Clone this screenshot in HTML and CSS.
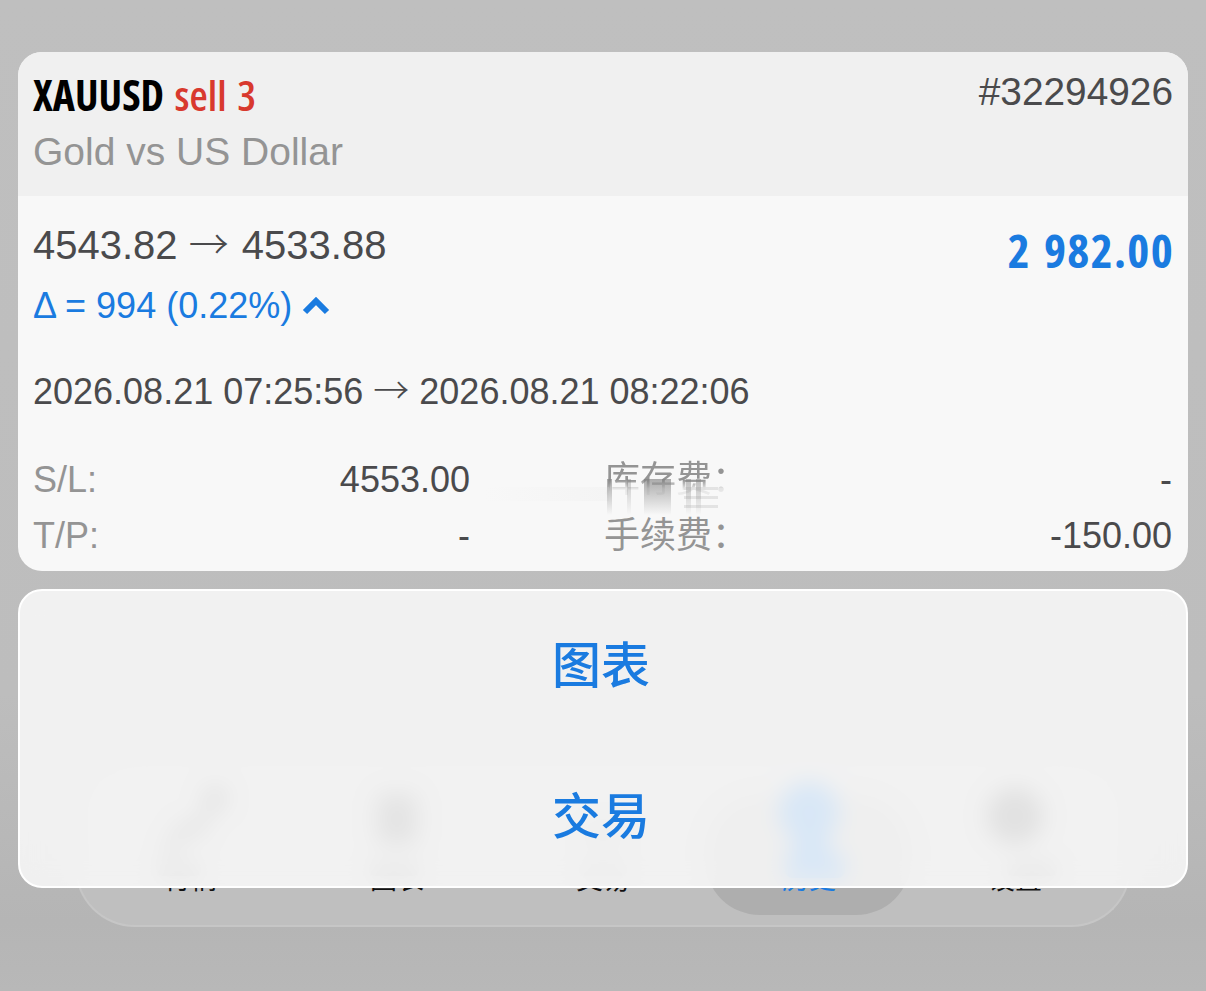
FILE: index.html
```html
<!DOCTYPE html>
<html lang="zh">
<head>
<meta charset="utf-8">
<title>XAUUSD</title>
<link rel="stylesheet" href="styles.css">
</head>
<body>
<nav class="tabbar">
  <span class="active-pill"></span>
  <div class="tab">
    <svg class="tab-icon" viewBox="0 0 60 70"><path d="M6 66 24 38 36 44 52 12" fill="none" stroke="#555" stroke-width="8"/><circle cx="54" cy="10" r="12" fill="#666"/><rect x="-4" y="76" width="44" height="12" rx="6" fill="#777"/></svg>
    <span class="tab-label">行情</span>
  </div>
  <div class="tab">
    <svg class="tab-icon" viewBox="0 0 60 70"><rect x="10" y="6" width="40" height="50" rx="8" fill="#666"/><rect x="2" y="76" width="50" height="12" rx="6" fill="#777"/></svg>
    <span class="tab-label">图表</span>
  </div>
  <div class="tab">
    <svg class="tab-icon" viewBox="0 0 60 70"><rect x="12" y="34" width="36" height="26" rx="8" fill="#aaa"/><rect x="6" y="76" width="48" height="12" rx="6" fill="#999"/></svg>
    <span class="tab-label">交易</span>
  </div>
  <div class="tab tab-on">
    <svg class="tab-icon" viewBox="0 0 60 70"><circle cx="30" cy="24" r="30" fill="#1a7be0"/><rect x="14" y="30" width="36" height="40" fill="#1a7be0"/><rect x="6" y="66" width="60" height="24" rx="8" fill="#1a7be0"/></svg>
    <span class="tab-label">历史</span>
  </div>
  <div class="tab">
    <svg class="tab-icon" viewBox="0 0 60 70"><circle cx="30" cy="28" r="28" fill="#555"/><rect x="22" y="76" width="50" height="12" rx="6" fill="#777"/></svg>
    <span class="tab-label">设置</span>
  </div>
</nav>

<main class="stage">
  <section class="card">
    <header class="card-head">
      <div class="head-row">
        <h1 class="title">XAUUSD <span class="sell">sell 3</span></h1>
        <span class="ticket">#32294926</span>
      </div>
      <p class="subtitle">Gold vs US Dollar</p>
    </header>
    <div class="card-body">
      <div class="price-row">
        <div>
          <div class="prices">4543.82 <span class="arrow">→</span> 4533.88</div>
          <div class="delta">Δ = 994 (0.22%)
            <svg class="chev" viewBox="0 0 28 18"><path d="M3 15 14 4 25 15" fill="none" stroke="currentColor" stroke-width="6"/></svg>
          </div>
        </div>
        <div class="profit">2 982.00</div>
      </div>
      <div class="times">2026.08.21 07:25:56 <span class="arrow">→</span> 2026.08.21 08:22:06</div>
      <div class="stats">
        <div class="stat"><span class="label">S/L:</span><span>4553.00</span></div>
        <div class="stat stat-smeared"><span class="label label-cut">库存费&#xFF1A;</span><span>-</span></div>
        <div class="stat"><span class="label">T/P:</span><span>-</span></div>
        <div class="stat"><span class="label">手续费&#xFF1A;</span><span>-150.00</span></div>
      </div>
    </div>
  </section>
  <section class="sheet">
    <button class="sheet-btn">图表</button>
    <button class="sheet-btn">交易</button>
  </section>
</main>
</body>
</html>
```
FILE: styles.css
```css
* { box-sizing: border-box; }
html, body { margin: 0; height: 100%; }
body {
  position: relative;
  width: 1206px;
  height: 991px;
  overflow: hidden;
  background: linear-gradient(#bfbfbf 0, #bdbdbd 70%, #b5b5b5 93%, #b8b8b8 100%);
  font-family: "Liberation Sans", "Noto Sans CJK SC", sans-serif;
  color: #4a4a4c;
}
.stage { position: relative; padding: 52px 18px 0; }

.card { border-radius: 24px; overflow: hidden; background: #f8f8f8; height: 519px; }
.card-head { height: 144px; background: #f0f0f0; padding: 20px 15px 0; }
.head-row { display: flex; justify-content: space-between; align-items: flex-start; }
.title {
  margin: 0;
  font: 700 42px/46px "Open Sans", sans-serif;
  font-stretch: 75%;
  word-spacing: 3px;
  color: #000;
}
.sell { color: #d8392e; font-weight: 600; }
.ticket { margin-top: 1px; font-size: 38.8px; line-height: 38px; }
.subtitle { margin: 11px 0 0; font-size: 39px; line-height: 46px; color: #949494; }

.card-body { padding: 26px 15px 0; }
.price-row { display: flex; justify-content: space-between; align-items: flex-start; }
.prices { font-size: 40px; line-height: 46px; }
.arrow { font-family: "Noto Sans CJK SC", sans-serif; font-weight: 300; line-height: 1; }
.prices .arrow { margin-right: 2px; }
.delta { margin-top: 17px; font-size: 36px; line-height: 42px; color: #1a7be0; display: flex; align-items: center; gap: 10px; }
.chev { width: 28px; height: 18px; }
.profit {
  font: 700 47px/56px "Open Sans", sans-serif;
  font-stretch: 75%;
  letter-spacing: 1.3px;
  word-spacing: 3px;
  margin-right: -1px;
  color: #1a7be0;
}
.times { margin-top: 43px; font-size: 36px; line-height: 44px; }
.stats {
  margin-top: 45px;
  display: grid;
  grid-template-columns: 437px 568px;
  column-gap: 134px;
  row-gap: 14px;
  font-size: 36px;
  line-height: 42px;
}
.stat { position: relative; display: flex; justify-content: space-between; }
.label { color: #949494; }
.label-cut {
  -webkit-mask-image: linear-gradient(#000 0, #000 50%, rgba(0,0,0,.2) 70%, rgba(0,0,0,.05) 100%);
  mask-image: linear-gradient(#000 0, #000 50%, rgba(0,0,0,.2) 70%, rgba(0,0,0,.05) 100%);
}
.stat-smeared::after {
  content: "";
  position: absolute;
  left: -120px;
  top: 20px;
  width: 240px;
  height: 36px;
  background:
    linear-gradient(rgba(130,130,130,.65), rgba(248,248,248,0)) 123px 0 / 5px 100% no-repeat,
    linear-gradient(rgba(130,130,130,.4), rgba(248,248,248,0)) 143px 0 / 4px 100% no-repeat,
    linear-gradient(rgba(130,130,130,.65), rgba(248,248,248,0)) 160px 0 / 27px 100% no-repeat,
    linear-gradient(rgba(130,130,130,.5), rgba(248,248,248,0)) 202px 0 / 5px 100% no-repeat,
    linear-gradient(rgba(130,130,130,.5), rgba(248,248,248,0)) 212px 0 / 5px 100% no-repeat,
    repeating-linear-gradient(rgba(222,222,222,.8) 0 3px, rgba(248,248,248,0) 3px 9px) 200px 8px / 34px 24px no-repeat,
    linear-gradient(90deg, rgba(248,248,248,0), rgba(243,243,243,.8)) 0 8px / 125px 14px no-repeat;
}

.sheet {
  margin-top: 18px;
  height: 299px;
  border: 2px solid #fff;
  border-radius: 24px;
  background: rgba(250,250,250,.85);
  -webkit-backdrop-filter: blur(11px);
  backdrop-filter: blur(11px);
  display: flex;
  flex-direction: column;
  gap: 7px;
}
.sheet-btn {
  flex: none;
  height: 144px;
  padding: 0 4px 2px 0;
  border: 0;
  background: none;
  font: 500 49px/60px "Noto Sans CJK SC", sans-serif;
  color: #1a7be0;
}

.tabbar {
  position: absolute;
  left: 75px;
  top: 760px;
  width: 1056px;
  height: 167px;
  border: 2px solid #c6c6c6;
  border-top-color: #c9c9c9;
  border-radius: 60px;
  background: #bfbfbf;
  display: flex;
  justify-content: space-around;
  align-items: flex-end;
  padding: 0 11px 31px;
}
.active-pill {
  position: absolute;
  left: 628px;
  bottom: 10px;
  width: 206px;
  height: 120px;
  border-radius: 55px;
  background: #aeaeae;
}
.tab {
  position: relative;
  width: 207px;
  display: flex;
  flex-direction: column;
  align-items: center;
  gap: 4px;
  font: 400 27px/32px "Noto Sans CJK SC", sans-serif;
  color: #111;
}
.tab-label { clip-path: inset(26px 0 0 0); }
.tab-icon { width: 60px; height: 70px; overflow: visible; }
.tab-on { color: #1a7be0; }
```
